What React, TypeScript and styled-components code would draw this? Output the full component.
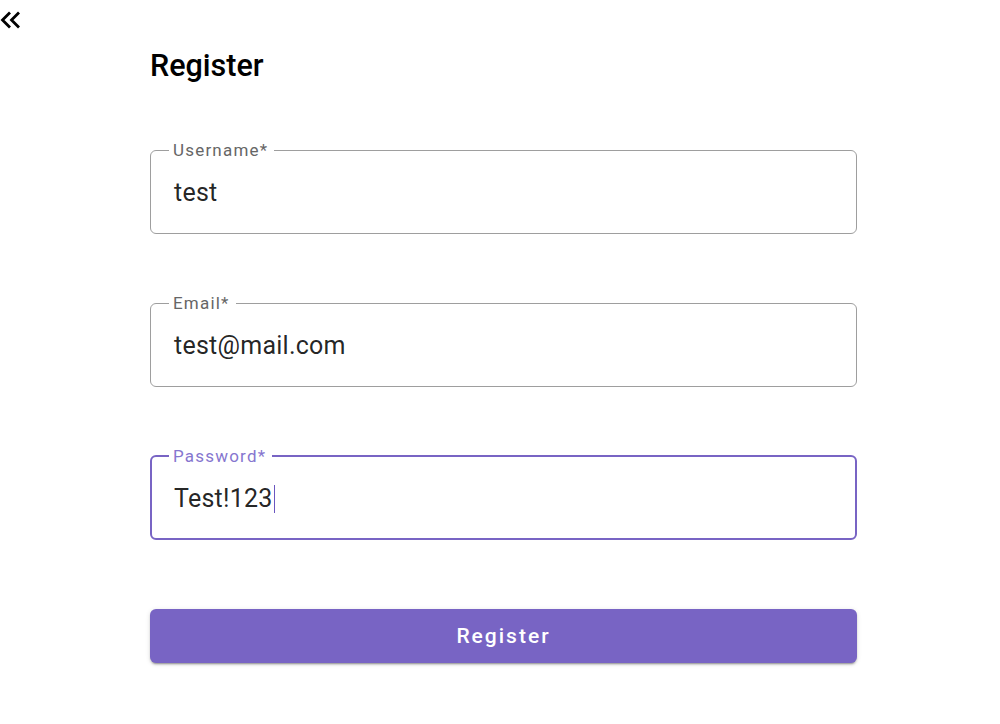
import React from "react";
import styled, { createGlobalStyle, css } from "styled-components";

const Global = createGlobalStyle`
  html, body { margin: 0; padding: 0; background: #ffffff; }
  body { font-family: Roboto, "Noto Sans", Arial, sans-serif; color: rgba(0,0,0,0.87); }
`;

const PRIMARY = "#7864c4";

const labelText = css`
  font-family: Roboto, "Noto Sans", Arial, sans-serif;
  font-size: 17px;
  letter-spacing: 1.2px;
  white-space: nowrap;
`;

const Page = styled.div`
  display: flex;
  flex-direction: column;
  width: 1000px;
  min-height: 724px;
`;

const TopBar = styled.div`
  display: flex;
  align-items: center;
  height: 32px;
`;

const BackButton = styled.button`
  display: flex;
  align-items: center;
  justify-content: center;
  padding: 0;
  margin: 7px 0 0 0;
  border: none;
  background: transparent;
  cursor: pointer;
  width: 22px;
  height: 18px;
`;

const Form = styled.form`
  display: flex;
  flex-direction: column;
  width: 707px;
  margin: 15px 0 0 150px;
`;

const Title = styled.h1`
  margin: 0 0 66px 0;
  font-size: 30.5px;
  line-height: 37px;
  font-weight: 500;
  color: #000;
  letter-spacing: 0;
`;

const Fields = styled.div`
  display: flex;
  flex-direction: column;
  gap: 69px;
`;

const FieldBox = styled.div`
  position: relative;
  height: 84px;
  display: flex;
  align-items: center;
  padding: 0 24px;
`;

const Outline = styled.fieldset<{ $focused?: boolean }>`
  position: absolute;
  inset: -7px 0 0 0;
  margin: 0;
  padding: 0 16px 0 ${(p) => (p.$focused ? "17px" : "18px")};
  border-radius: 6px;
  border: ${(p) => (p.$focused ? `2.5px solid ${PRIMARY}` : "1px solid #9e9e9e")};
  pointer-events: none;
  text-align: left;
  min-width: 0;
`;

const Legend = styled.legend`
  ${labelText};
  padding: 0 6px 0 4px;
  line-height: 14px;
  height: 14px;
  visibility: hidden;
`;

const Label = styled.span<{ $focused?: boolean }>`
  ${labelText};
  position: absolute;
  left: 23px;
  top: -10px;
  line-height: 20px;
  color: ${(p) => (p.$focused ? "#8676cf" : "#666666")};
`;

const Value = styled.div`
  position: relative;
  font-size: 25px;
  line-height: 28px;
  letter-spacing: 0.25px;
  color: rgba(0, 0, 0, 0.87);
  display: flex;
  align-items: center;
  margin-top: 1px;
`;

const Caret = styled.span`
  display: inline-block;
  width: 1px;
  height: 28px;
  margin-left: 1px;
  background: #6a56c0;
`;

const SubmitButton = styled.button`
  margin-top: 69px;
  height: 54px;
  width: 100%;
  border: none;
  border-radius: 6px;
  background: ${PRIMARY};
  color: #ffffff;
  font-family: Roboto, sans-serif;
  font-size: 21px;
  font-weight: 500;
  letter-spacing: 2px;
  box-shadow: 0 3px 1px -2px rgba(0,0,0,0.2), 0 2px 2px 0 rgba(0,0,0,0.14), 0 1px 5px 0 rgba(0,0,0,0.12);
  cursor: pointer;
`;

function Field({ label, value, focused }: { label: string; value: string; focused?: boolean }) {
  return (
    <FieldBox>
      <Outline $focused={focused}>
        <Legend>{label}</Legend>
      </Outline>
      <Label $focused={focused}>{label}</Label>
      <Value>
        {value}
        {focused && <Caret />}
      </Value>
    </FieldBox>
  );
}

export default function App() {
  return (
    <Page>
      <Global />
      <TopBar>
        <BackButton aria-label="back">
          <svg width="22" height="18" viewBox="0 0 22 18">
            <path d="M10 1.5 L2.5 9 L10 16.5" fill="none" stroke="#000" strokeWidth="2.8" />
            <path d="M19 1.5 L11.5 9 L19 16.5" fill="none" stroke="#000" strokeWidth="2.8" />
          </svg>
        </BackButton>
      </TopBar>
      <Form onSubmit={(e) => e.preventDefault()}>
        <Title>Register</Title>
        <Fields>
          <Field label="Username*" value="test" />
          <Field label="Email*" value="test@mail.com" />
          <Field label="Password*" value="Test!123" focused />
        </Fields>
        <SubmitButton type="submit">Register</SubmitButton>
      </Form>
    </Page>
  );
}
